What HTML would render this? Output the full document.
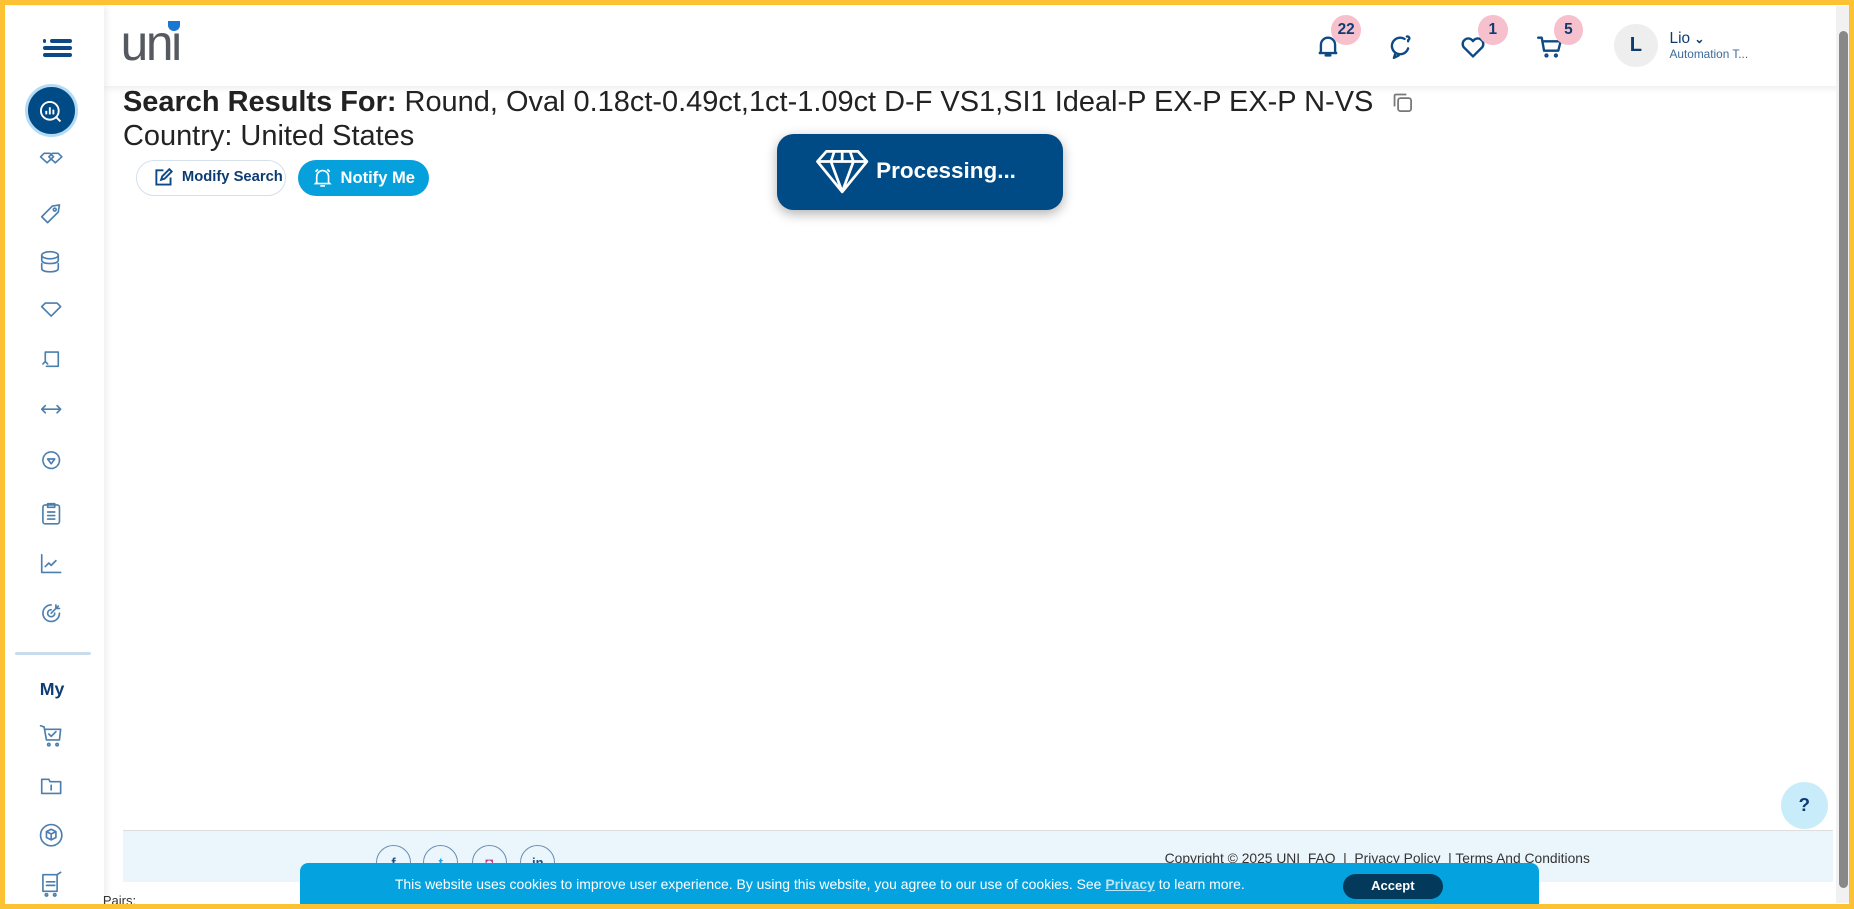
<!DOCTYPE html>
<html><head><meta charset="utf-8"><style>
html,body{margin:0;padding:0;overflow:hidden}
body{width:1854px;height:909px;background:#fff}
#w{zoom:1.18240;width:1568px;height:769px;position:relative;font-family:"Liberation Sans",sans-serif;overflow:hidden;background:#fff}
.a{position:absolute}
.ic{position:absolute;left:31px;width:24px;height:24px}
.ic svg{width:24px;height:24px;fill:none;stroke:#4d7fae;stroke-width:1.4;stroke-linecap:round;stroke-linejoin:round}
.hi svg{width:22px;height:22px;fill:none;stroke:#0d4a85;stroke-width:2;stroke-linecap:round;stroke-linejoin:round}
.badge{position:absolute;width:25px;height:25px;border-radius:50%;background:#f7c0cd;color:#0d3c73;font-weight:bold;font-size:13px;text-align:center;line-height:25px}
.soc{position:absolute;top:715px;width:28px;height:28px;border:1px solid #6b8fb3;border-radius:50%;font-size:11px;color:#1a4f8a;text-align:center;line-height:28px;font-weight:bold}
</style></head><body><div id="w">
<div class="a" style="left:88px;top:5px;right:5px;height:68px;background:#fff;box-shadow:0 2px 6px rgba(0,0,0,.08)"></div>
<div class="a" style="left:5px;top:5px;width:83px;height:764px;background:#fff;box-shadow:2px 0 6px rgba(0,0,0,.08)"></div>
<div class="a" style="left:42px;top:33px;width:19px;height:3px;background:#0d4a85;border-radius:2px"></div>
<div class="a" style="left:36px;top:33px;width:3px;height:3px;background:#0d4a85;border-radius:2px"></div>
<div class="a" style="left:36px;top:39px;width:25px;height:3px;background:#0d4a85;border-radius:2px"></div>
<div class="a" style="left:36px;top:45px;width:25px;height:3px;background:#0d4a85;border-radius:2px"></div>
<div class="a" style="left:102px;top:14px;font-size:42px;color:#555a60;letter-spacing:-2px;line-height:44px">uni</div>
<div class="a" style="left:142px;top:18px;width:10px;height:8px;background:#1976d2;border-radius:0 0 5px 5px"></div>
<div class="a" style="left:23px;top:73px;width:40px;height:40px;border-radius:50%;background:#004a85;border:3px solid #b3dcf4;margin:-2px"></div>
<svg class="a" style="left:32px;top:84px" width="22" height="22" viewBox="0 0 22 22" fill="none" stroke="#fff" stroke-width="1.6"><circle cx="10" cy="10" r="7.5"/><path d="M7 13v-3M10 13V7M13 13v-4M15.5 15.5L19 19"/></svg>
<div class="ic" style="top:123px"><svg viewBox="0 0 24 24"><path d="M3 10l3-3h5l3 3-5.5 5z M10 10l3-3h5l3 3-5.5 5z"/></svg></div>
<div class="ic" style="top:168px"><svg viewBox="0 0 24 24"><path d="M4 15l9-9 6-1-1 6-9 9z"/><circle cx="15" cy="9" r="1.2"/></svg></div>
<div class="ic" style="top:209px"><svg viewBox="0 0 24 24"><ellipse cx="11" cy="7" rx="7" ry="3"/><path d="M4 7v4c0 2 3 3 7 3s7-1 7-3V7M4 14v4c0 2 3 3 7 3s7-1 7-3v-4"/></svg></div>
<div class="ic" style="top:250px"><svg viewBox="0 0 24 24"><path d="M4 9l3-3h10l3 3-8 8z"/></svg></div>
<div class="ic" style="top:292px"><svg viewBox="0 0 24 24"><path d="M7 14V6h11v12H8M5 16l2-2 2 2"/></svg></div>
<div class="ic" style="top:334px"><svg viewBox="0 0 24 24"><path d="M4 12h16M7 9l-3 3 3 3M17 9l3 3-3 3"/></svg></div>
<div class="ic" style="top:377px"><svg viewBox="0 0 24 24"><circle cx="12" cy="12" r="7" stroke-dasharray="2 1"/><path d="M9 11h6l-3 4z"/></svg></div>
<div class="ic" style="top:422px"><svg viewBox="0 0 24 24"><rect x="5" y="5" width="14" height="16" rx="2"/><path d="M9 4h6v3H9zM9 11h6M9 14h6M9 17h6"/></svg></div>
<div class="ic" style="top:465px"><svg viewBox="0 0 24 24"><path d="M4 4v15h16M7 14l3-3 2 2 4-4"/></svg></div>
<div class="ic" style="top:507px"><svg viewBox="0 0 24 24"><path d="M19 12a7 7 0 1 1-7-7"/><path d="M15 12a3 3 0 1 1-3-3M12 12l6-6M16 5v3h3"/></svg></div>
<div class="a" style="left:13px;top:551px;width:64px;height:3px;background:#c9dcec;border-radius:2px"></div>
<div class="a" style="left:0;width:88px;top:574px;text-align:center;font-weight:bold;font-size:15px;color:#0d3c73">My</div>
<div class="ic" style="top:610px"><svg viewBox="0 0 24 24"><path d="M3 4l3 1 2 11h11l1-9H7M10 11l2 2 4-4"/><circle cx="10" cy="20" r="1"/><circle cx="17" cy="20" r="1"/></svg></div>
<div class="ic" style="top:652px"><svg viewBox="0 0 24 24"><path d="M4 7h6l1 2h9v10H4z"/><path d="M12 12v4"/></svg></div>
<div class="ic" style="top:694px"><svg viewBox="0 0 24 24"><circle cx="12" cy="12" r="9"/><path d="M8 9l4-2 4 2v5l-4 2-4-2zM12 11v5M8 9l4 2 4-2"/></svg></div>
<div class="ic" style="top:736px"><svg viewBox="0 0 24 24"><path d="M5 4h12v14H5zM8 10h7M8 13h7M17 4l3-2"/><circle cx="8" cy="21" r="1"/><circle cx="15" cy="21" r="1"/></svg></div>
<div class="a" style="left:104px;top:72px;font-size:24.5px;color:#222;line-height:29px;white-space:nowrap"><b>Search Results For:</b> Round, Oval 0.18ct-0.49ct,1ct-1.09ct D-F VS1,SI1 Ideal-P EX-P EX-P N-VS<br>Country: United States</div>
<svg class="a" style="left:1176px;top:77px" width="20" height="20" viewBox="0 0 20 20" fill="none" stroke="#777" stroke-width="1.5"><rect x="6" y="6" width="11" height="11" rx="2"/><path d="M3 13V4a1 1 0 0 1 1-1h9"/></svg>
<div class="a" style="left:115px;top:135px;width:127px;height:31px;border:1.5px solid #d5e0ea;border-radius:16px;box-sizing:border-box;font-size:12.5px;font-weight:bold;color:#0d3c73;line-height:28px;padding-left:38px;white-space:nowrap">Modify Search</div>
<svg class="a" style="left:130px;top:142px" width="16" height="16" viewBox="0 0 16 16" fill="none" stroke="#0d4a85" stroke-width="1.6"><path d="M8 2H2v12h12V8M6 10l1-3 6-6 2 2-6 6z"/></svg>
<div class="a" style="left:252px;top:135px;width:111px;height:31px;background:#06a0dc;border-radius:16px;font-size:14px;font-weight:bold;color:#fff;line-height:31px;padding-left:36px;box-sizing:border-box;white-space:nowrap">Notify Me</div>
<svg class="a" style="left:264px;top:141px" width="18" height="18" viewBox="0 0 18 18" fill="none" stroke="#fff" stroke-width="1.4"><path d="M4 13V8a5 5 0 0 1 10 0v5l1 1H3zM7 16h4M3 4l2-2M15 4l-2-2"/></svg>
<div class="a" style="left:657px;top:113px;width:242px;height:65px;background:#004a85;border-radius:14px;box-shadow:0 3px 10px rgba(0,0,0,.3)"></div>
<svg class="a" style="left:689px;top:125px" width="46" height="40" viewBox="0 0 48 42" fill="none" stroke="#fff" stroke-width="2.4" stroke-linejoin="round"><path d="M10 3h28l8 9-22 27L2 12zM2 12h44M17 3l-3 9 10 27M31 3l3 9-10 27M24 3v9"/></svg>
<div class="a" style="left:741px;top:134px;font-size:19px;font-weight:bold;color:#fff">Processing...</div>
<div class="a hi" style="left:1112px;top:28px"><svg viewBox="0 0 22 22"><path d="M5 16V10a6 6 0 0 1 12 0v6l1 1H4zM9 19h4"/></svg></div>
<div class="a hi" style="left:1174px;top:28px"><svg viewBox="0 0 22 22"><path d="M14 5a7 7 0 1 0 3 8M6 18l-1 3 4-2M16 3a1.5 1.5 0 1 1 1 3v1"/></svg></div>
<div class="a hi" style="left:1235px;top:29px"><svg viewBox="0 0 22 22"><path d="M11 19L3 11a4.5 4.5 0 0 1 8-5 4.5 4.5 0 0 1 8 5z"/></svg></div>
<div class="a hi" style="left:1300px;top:28px"><svg viewBox="0 0 22 22"><path d="M1 4h3l2 11h12l2-8H6"/><circle cx="8" cy="19" r=".8"/><circle cx="16" cy="19" r=".8"/></svg></div>
<div class="badge" style="left:1126px;top:13px">22</div>
<div class="badge" style="left:1250px;top:13px">1</div>
<div class="badge" style="left:1314px;top:13px">5</div>
<div class="a" style="left:1365px;top:20px;width:37px;height:37px;border-radius:50%;background:#eee;color:#0d3c73;font-weight:bold;font-size:17px;text-align:center;line-height:37px">L</div>
<div class="a" style="left:1412px;top:25px;font-size:13px;color:#0d3c73">Lio <span style="font-size:10px;font-weight:bold">&#8964;</span></div>
<div class="a" style="left:1412px;top:40px;font-size:10px;color:#3a6a9a">Automation T...</div>
<div class="a" style="left:1506px;top:661px;width:40px;height:40px;border-radius:50%;background:#c9ecfb;color:#0d3c73;font-weight:bold;font-size:16px;text-align:center;line-height:40px">?</div>
<div class="a" style="left:104px;top:702px;width:1446px;height:43px;background:#ebf6fc;border-top:1px solid #ddd"></div>
<div class="soc" style="left:318px">f</div>
<div class="soc" style="left:358px;color:#1da1f2">t</div>
<div class="soc" style="left:399px;color:#c13584">◘</div>
<div class="soc" style="left:440px">in</div>
<div class="a" style="left:985px;top:719px;font-size:11.7px;color:#333;white-space:nowrap">Copyright © 2025 UNI &nbsp;FAQ &nbsp;| &nbsp;Privacy Policy &nbsp;| Terms And Conditions</div>
<div class="a" style="left:87px;top:755px;font-size:11px;color:#333">Pairs:</div>
<div class="a" style="left:254px;top:730px;width:1048px;height:39px;background:#04a3e0;border-radius:7px 7px 0 0"></div>
<div class="a" style="left:334px;top:741px;font-size:11.8px;color:#fff;white-space:nowrap">This website uses cookies to improve user experience. By using this website, you agree to our use of cookies. See <u style="color:#b7e4f7;font-weight:bold">Privacy</u> to learn more.</div>
<div class="a" style="left:1136px;top:739px;width:84px;height:21px;background:#033a5c;border-radius:11px;color:#fff;font-size:11px;font-weight:bold;text-align:center;line-height:21px">Accept</div>
<div class="a" style="left:1553px;top:5px;width:12px;height:759px;background:#f1f1f1"></div>
<div class="a" style="left:1555px;top:26px;width:8px;height:725px;background:#888;border-radius:4px"></div>
<div class="a" style="left:0;top:0;width:1568px;height:769px;box-sizing:border-box;border:5px solid #fdc233;pointer-events:none"></div>
</div></body></html>
